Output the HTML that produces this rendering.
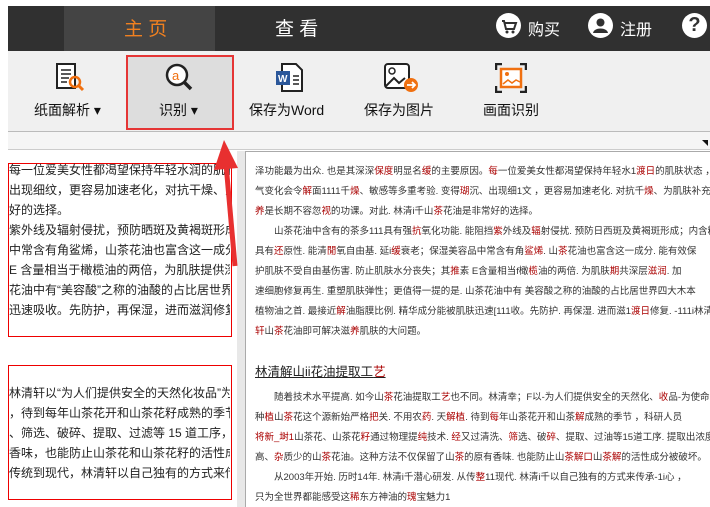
<!DOCTYPE html>
<html><head><meta charset="utf-8"><style>
*{margin:0;padding:0;box-sizing:border-box}
body{width:710px;height:507px;overflow:hidden;background:#fff;font-family:"Liberation Sans","Noto Sans CJK SC",sans-serif;position:relative}
.abs{position:absolute}
#top{left:8px;top:6px;width:702px;height:45px;background:#303030}
#tab{left:64px;top:6px;width:151px;height:45px;background:#444}
.tt{font-size:19px;top:14px;color:#fff}
.circ{width:25px;height:25px;border-radius:50%;background:#fff;top:13px}
.wt{color:#fff;font-size:16px;top:16px}
#tool{left:8px;top:51px;width:702px;height:81px;background:#f0f0f0;border-bottom:1px solid #bbb}
#strip{left:8px;top:132px;width:702px;height:18px;background:#f5f5f5;border-bottom:1px solid #ccc}
.lbl{font-size:14px;color:#111;top:100px;white-space:nowrap}
#left{left:0;top:151px;width:237px;height:356px;background:#fff}
#gap{left:237px;top:151px;width:8px;height:356px;background:#e8e8e8}
#right{left:245px;top:151px;width:465px;height:356px;background:#fff;border-left:1px solid #aaa;border-top:1px solid #aaa}
.lt{left:9px;font-size:12px;color:#222;white-space:nowrap;overflow:hidden;width:221px}
.rt{left:255px;font-size:9.5px;color:#333;white-space:nowrap;overflow:hidden;width:455px}
.r{color:#a00}
.box{border:1.5px solid #e00;left:8px;width:224px}
</style></head><body>
<div class="abs" id="top"></div><div class="abs" id="tab"></div>
<div class="abs tt" style="left:124px;color:#f08020">主 页</div>
<div class="abs tt" style="left:275px">查 看</div>
<div class="abs circ" style="left:496px"><svg width="25" height="25"><path d="M6 8h2l2 8h8l2-6H9" fill="none" stroke="#303030" stroke-width="2"/><circle cx="11" cy="19" r="1.5" fill="#303030"/><circle cx="17" cy="19" r="1.5" fill="#303030"/></svg></div>
<div class="abs wt" style="left:528px">购买</div>
<div class="abs circ" style="left:588px"><svg width="25" height="25"><circle cx="12.5" cy="9.5" r="4" fill="#303030"/><path d="M5 20c1-6 14-6 15 0z" fill="#303030"/></svg></div>
<div class="abs wt" style="left:620px">注册</div>
<div class="abs circ" style="left:682px;text-align:center;font-weight:bold;font-size:20px;line-height:25px;color:#303030">?</div>
<div class="abs" id="tool"></div>
<div class="abs" style="left:126px;top:55px;width:108px;height:75px;background:#ddd;border:2px solid #e53535"></div>
<svg class="abs" style="left:55px;top:63px" width="32" height="30"><rect x="2" y="1" width="18" height="24" fill="#fff" stroke="#222" stroke-width="2"/><path d="M6 7h10M6 11h10M6 15h8M6 19h6" stroke="#222" stroke-width="1.5"/><circle cx="20" cy="19" r="5" fill="none" stroke="#f07010" stroke-width="2.5"/><path d="M24 23l4 4" stroke="#f07010" stroke-width="3"/></svg>
<svg class="abs" style="left:163px;top:62px" width="34" height="30"><circle cx="14" cy="13" r="10" fill="#fff" stroke="#222" stroke-width="2.5"/><text x="9" y="18" font-size="13" fill="#f07010" font-family="Liberation Sans">a</text><path d="M21 20l7 7" stroke="#222" stroke-width="3.5"/></svg>
<svg class="abs" style="left:274px;top:63px" width="32" height="30"><path d="M8 1h14l6 6v21H8z" fill="#fff" stroke="#222" stroke-width="2"/><rect x="2" y="8" width="14" height="14" fill="#2b579a"/><text x="4" y="19" font-size="10" fill="#fff" font-weight="bold" font-family="Liberation Sans">W</text><path d="M19 13h6M19 17h6M19 21h6" stroke="#222" stroke-width="1.5"/></svg>
<svg class="abs" style="left:383px;top:62px" width="38" height="32"><rect x="2" y="2" width="24" height="24" rx="3" fill="#fff" stroke="#222" stroke-width="2"/><circle cx="9" cy="9" r="3" fill="none" stroke="#222" stroke-width="1.5"/><path d="M3 24l8-8 5 5 6-5" fill="none" stroke="#222" stroke-width="2"/><circle cx="28" cy="23" r="7" fill="#f07010"/><path d="M24 23h7M29 20l3 3-3 3" stroke="#fff" stroke-width="1.8" fill="none"/></svg>
<svg class="abs" style="left:495px;top:63px" width="32" height="30"><path d="M1 7V1h6M25 1h6v6M31 23v6h-6M7 29H1v-6" fill="none" stroke="#222" stroke-width="2.5"/><rect x="6" y="6" width="20" height="18" fill="#fff" stroke="#f07010" stroke-width="2.5"/><circle cx="12" cy="11" r="2" fill="#f07010"/><path d="M8 21l5-4 4 3 4-3 4 2" fill="none" stroke="#f07010" stroke-width="1.5"/></svg>
<div class="abs lbl" style="left:34px">纸面解析 ▾</div>
<div class="abs lbl" style="left:159px">识别 ▾</div>
<div class="abs lbl" style="left:249px">保存为Word</div>
<div class="abs lbl" style="left:364px">保存为图片</div>
<div class="abs lbl" style="left:483px">画面识别</div>
<div class="abs" id="strip"></div>
<div class="abs" style="left:702px;top:140px;width:0;height:0;border-left:6px solid transparent;border-top:6px solid #111"></div>
<div class="abs" id="left"></div><div class="abs" id="gap"></div><div class="abs" id="right"></div>
<div class="abs box" style="top:163px;height:174px"></div>
<div class="abs box" style="top:365px;height:135px"></div>
<div class="abs lt" style="top:161px">每一位爱美女性都渴望保持年轻水润的肌肤状态，但天</div>
<div class="abs lt" style="top:181px">出现细纹，更容易加速老化，对抗干燥、为肌肤补充营</div>
<div class="abs lt" style="top:201px">好的选择。</div>
<div class="abs lt" style="top:221px">紫外线及辐射侵扰，预防晒斑及黄褐斑形成；内含糅质</div>
<div class="abs lt" style="top:241px">中常含有角鲨烯，山茶花油也富含这一成分，能有效保</div>
<div class="abs lt" style="top:261px">E 含量相当于橄榄油的两倍，为肌肤提供深层滋润，加</div>
<div class="abs lt" style="top:281px">花油中有“美容酸”之称的油酸的占比居世界四大木本</div>
<div class="abs lt" style="top:301px">迅速吸收。先防护，再保湿，进而滋润修复，一瓶林清</div>
<div class="abs lt" style="top:384px">林清轩以“为人们提供安全的天然化妆品”为使命，从</div>
<div class="abs lt" style="top:404px">，待到每年山茶花开和山茶花籽成熟的季节，科研人员</div>
<div class="abs lt" style="top:424px">、筛选、破碎、提取、过滤等 15 道工序，提取出浓度</div>
<div class="abs lt" style="top:444px">香味，也能防止山茶花和山茶花籽的活性成分被破坏。</div>
<div class="abs lt" style="top:464px">传统到现代，林清轩以自己独有的方式来传承“匠心”，</div>
<svg class="abs" style="left:210px;top:136px" width="40" height="132"><path d="M25 130L16 28" stroke="#e83030" stroke-width="5"/><path d="M14 4L4 34L28 32z" fill="#e83030"/></svg>
<div class="abs rt" style="top:163px">泽功能最为出众. 也是其深深<span class="r">保度</span>明显名<span class="r">缓</span>的主要原因。<span class="r">每</span>一位爱美女性都渴望保持年轻水1<span class="r">渡日</span>的肌肤状态 ，但天</div>
<div class="abs rt" style="top:183px">气变化会令<span class="r">解</span>面1111千<span class="r">燥</span>、敏感等多重考验. 变得<span class="r">瑚</span>沉、出现细1文 ，更容易加速老化. 对抗千<span class="r">燥</span>、为肌肤补充营</div>
<div class="abs rt" style="top:203px"><span class="r">养</span>是长期不容忽<span class="r">视</span>的功课。对此. 林清i千山<span class="r">茶</span>花油是非常好的选择。</div>
<div class="abs rt" style="top:223px">　　山茶花油中含有的茶多111具有强<span class="r">抗</span>氧化功能. 能阻挡<span class="r">紫</span>外线及<span class="r">辐</span>射侵扰. 预防日西斑及黄褐斑形成；内含糅质</div>
<div class="abs rt" style="top:243px">具有<span class="r">还</span>原性. 能清<span class="r">閒</span>氧自由基. 延i<span class="r">缓</span>衰老；保湿美容品中常含有角<span class="r">鲨烯</span>. 山<span class="r">茶</span>花油也富含这一成分. 能有效保</div>
<div class="abs rt" style="top:263px">护肌肤不受自由基伤害. 防止肌肤水分丧失；其<span class="r">推</span>素 E含量相当f橄<span class="r">榄</span>油的两倍. 为肌肤<span class="r">期</span>共深层<span class="r">滋润</span>. 加</div>
<div class="abs rt" style="top:283px">速细胞修复再生. 重塑肌肤弹性；更值得一提的是. 山茶花油中有 美容酸之称的油酸的占比居世界四大木本</div>
<div class="abs rt" style="top:303px">植物油之首. 最接近<span class="r">解</span>油脂膜比例. 精华成分能被肌肤迅速[111收。先防护. 再保湿. 进而滋1<span class="r">渡日</span>修复. -111i林清</div>
<div class="abs rt" style="top:323px"><span class="r">轩</span>山<span class="r">茶</span>花油即可解决滋<span class="r">养</span>肌肤的大问题。</div>
<div class="abs rt" style="top:361px;font-size:12.5px;color:#222;text-decoration:underline">林清解山ii花油提取工<span class="r">艺</span></div>
<div class="abs rt" style="top:389px">　　随着技术水平提高. 如今山<span class="r">茶</span>花油提取工<span class="r">艺</span>也不同。林清幸；F以-为人们提供安全的天然化、<span class="r">收</span>品-为使命. 从</div>
<div class="abs rt" style="top:409px">种<span class="r">植</span>山<span class="r">茶</span>花这个源新始严格<span class="r">把</span>关. 不用农<span class="r">药</span>. 天<span class="r">解植</span>. 待到<span class="r">每</span>年山茶花开和山茶<span class="r">解</span>成熟的季节 ，科研人员</div>
<div class="abs rt" style="top:429px"><span class="r">将新_埘1</span>山茶花、山茶花<span class="r">籽</span>通过物理提<span class="r">纯</span>技术. <span class="r">经</span>又过清洗、<span class="r">筛</span>选、破<span class="r">碎</span>、提取、过油等15道工序. 提取出浓度</div>
<div class="abs rt" style="top:449px">高、<span class="r">杂</span>质少的山<span class="r">茶</span>花油。这种方法不仅保留了山<span class="r">茶</span>的原有香味. 也能防止山<span class="r">茶解口</span>山<span class="r">茶解</span>的活性成分被破坏。</div>
<div class="abs rt" style="top:469px">　　从2003年开始. 历时14年. 林清i千潜心研发. 从传<span class="r">整</span>11现代. 林清i千以自己独有的方式来传承-1i心 ，</div>
<div class="abs rt" style="top:489px">只为全世界都能感受这<span class="r">稀</span>东方神油的<span class="r">瑰</span>宝魅力1</div>
</body></html>
